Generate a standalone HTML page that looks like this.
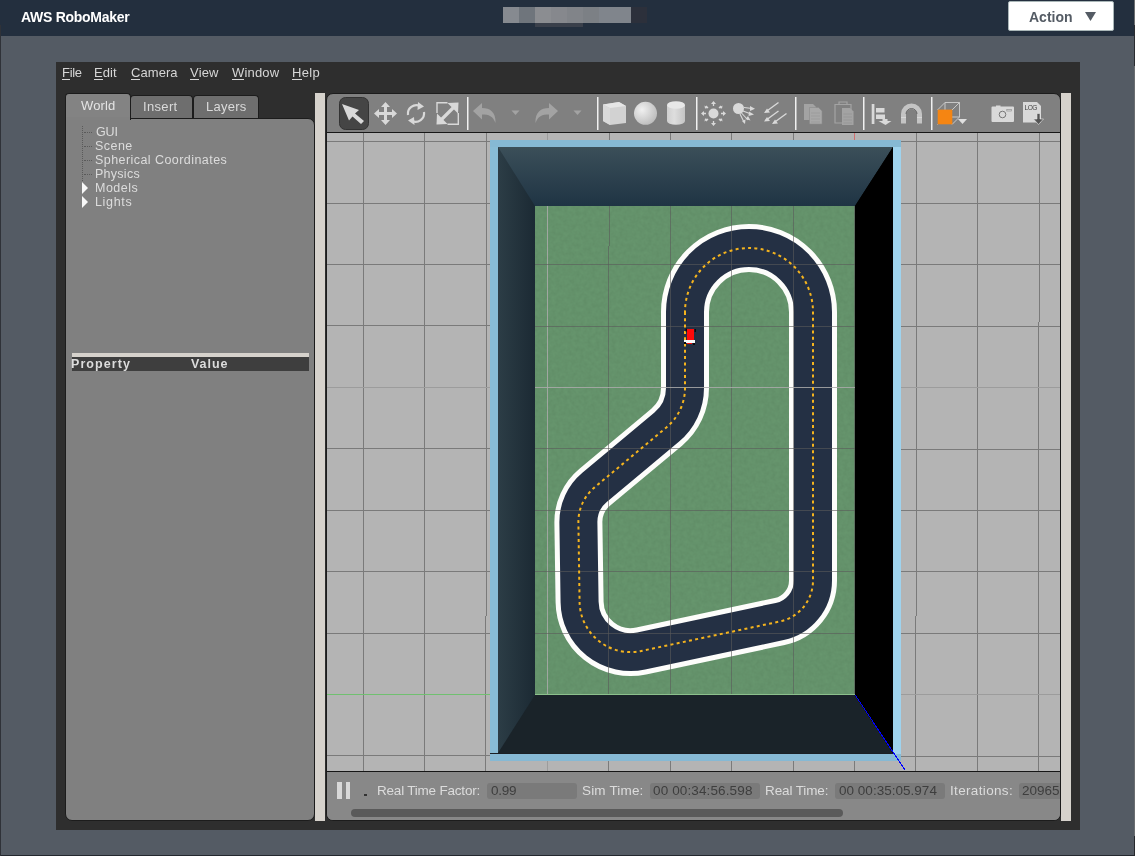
<!DOCTYPE html>
<html><head><meta charset="utf-8">
<style>
*{box-sizing:border-box}
html,body{margin:0;padding:0}
body{width:1135px;height:856px;overflow:hidden;position:relative;background:#545b64;font-family:"Liberation Sans", sans-serif}
.a{position:absolute}
.t{position:absolute;white-space:nowrap;line-height:1;will-change:transform}
</style></head><body>
<!-- top bar -->
<div class="a" style="left:0;top:0;width:1135px;height:36px;background:#232f3e"></div>
<div class="t" style="left:21px;top:10px;font-size:14px;font-weight:bold;letter-spacing:-0.283px;color:#fff;">AWS RoboMaker</div>
<!-- blurred title -->
<div class="a" style="left:503px;top:7px;width:16px;height:16px;background:#868a90"></div>
<div class="a" style="left:519px;top:7px;width:16px;height:16px;background:#6f757c"></div>
<div class="a" style="left:535px;top:7px;width:16px;height:16px;background:#8b8d91"></div>
<div class="a" style="left:551px;top:7px;width:16px;height:16px;background:#86888d"></div>
<div class="a" style="left:567px;top:7px;width:16px;height:16px;background:#818489"></div>
<div class="a" style="left:583px;top:7px;width:16px;height:16px;background:#7c8085"></div>
<div class="a" style="left:599px;top:7px;width:32px;height:16px;background:#80858c"></div>
<div class="a" style="left:631px;top:7px;width:16px;height:16px;background:#2c303b"></div>
<div class="a" style="left:535px;top:23px;width:48px;height:4px;background:#3a404b"></div>
<!-- action button -->
<div class="a" style="left:1008px;top:1px;width:106px;height:30px;background:#fff;border:1px solid #aab7b8;border-radius:2px"></div>
<div class="t" style="left:1029px;top:10px;font-size:14px;font-weight:bold;letter-spacing:0.0px;color:#545b64;">Action</div>
<svg class="a" style="left:1085px;top:12px" width="11" height="9"><path d="M0 0H11L5.5 9Z" fill="#545b64"/></svg>

<!-- gazebo window -->
<div class="a" style="left:56px;top:62px;width:1024px;height:768px;background:#2e2e2e"></div>
<div class="a" style="left:0;top:855px;width:1135px;height:1px;background:#23272e"></div>
<div class="a" style="left:0;top:25px;width:1px;height:831px;background:#2f3238"></div>
<div class="a" style="left:1134px;top:0;width:1px;height:25px;background:#6c6e70"></div>
<div class="a" style="left:1134px;top:25px;width:1px;height:41px;background:#2a2c30"></div>
<div class="a" style="left:1134px;top:66px;width:1px;height:770px;background:#6a6d70"></div>
<div class="a" style="left:1134px;top:836px;width:1px;height:20px;background:#26282c"></div>
<div class="t" style="left:61.5px;top:66px;font-size:13px;letter-spacing:-0.3px;color:#d6d6d6;"><span style="display:inline-block;height:14px;border-bottom:1px solid #d6d6d6">F</span>ile</div>
<div class="t" style="left:93.8px;top:66px;font-size:13px;letter-spacing:0.067px;color:#d6d6d6;"><span style="display:inline-block;height:14px;border-bottom:1px solid #d6d6d6">E</span>dit</div>
<div class="t" style="left:130.5px;top:66px;font-size:13px;letter-spacing:0.06px;color:#d6d6d6;"><span style="display:inline-block;height:14px;border-bottom:1px solid #d6d6d6">C</span>amera</div>
<div class="t" style="left:190.4px;top:66px;font-size:13px;letter-spacing:0.033px;color:#d6d6d6;"><span style="display:inline-block;height:14px;border-bottom:1px solid #d6d6d6">V</span>iew</div>
<div class="t" style="left:231.5px;top:66px;font-size:13px;letter-spacing:0.18px;color:#d6d6d6;"><span style="display:inline-block;height:14px;border-bottom:1px solid #d6d6d6">W</span>indow</div>
<div class="t" style="left:291.5px;top:66px;font-size:13px;letter-spacing:0.3px;color:#d6d6d6;"><span style="display:inline-block;height:14px;border-bottom:1px solid #d6d6d6">H</span>elp</div>


<!-- tabs -->
<div class="a" style="left:130px;top:95px;width:63px;height:24px;background:#6e6e6e;border:1px solid #1c1c1c;border-bottom:none;border-radius:4px 4px 0 0"></div>
<div class="a" style="left:193px;top:95px;width:66px;height:24px;background:#6e6e6e;border:1px solid #1c1c1c;border-bottom:none;border-radius:4px 4px 0 0"></div>
<div class="a" style="left:65px;top:118px;width:250px;height:703px;background:#808080;border:1px solid #1c1c1c;border-radius:0 7px 7px 7px"></div>
<div class="a" style="left:65px;top:93px;width:66px;height:27px;background:#838383;border:1px solid #1c1c1c;border-bottom:none;border-radius:4px 4px 0 0"></div>
<div class="a" style="left:66px;top:117px;width:64px;height:3px;background:#818181"></div>
<div class="t" style="left:81px;top:99px;font-size:13px;letter-spacing:0.125px;color:#e4e4e4;">World</div>
<div class="t" style="left:142.6px;top:100px;font-size:13px;letter-spacing:0.34px;color:#dadada;">Insert</div>
<div class="t" style="left:206px;top:100px;font-size:13px;letter-spacing:0.26px;color:#dadada;">Layers</div>
<!-- tree -->
<div class="a" style="left:82px;top:126px;width:0;height:55px;border-left:1px dotted #5a5a5a"></div>
<div class="a" style="left:84px;top:132px;width:8px;height:0;border-top:1px dotted #5a5a5a"></div>
<div class="a" style="left:84px;top:146px;width:8px;height:0;border-top:1px dotted #5a5a5a"></div>
<div class="a" style="left:84px;top:160px;width:8px;height:0;border-top:1px dotted #5a5a5a"></div>
<div class="a" style="left:84px;top:174px;width:8px;height:0;border-top:1px dotted #5a5a5a"></div>
<svg class="a" style="left:82px;top:182px" width="8" height="12"><path d="M0 0L6 6L0 12Z" fill="#f8f8f8"/></svg>
<svg class="a" style="left:82px;top:196px" width="8" height="12"><path d="M0 0L6 6L0 12Z" fill="#f8f8f8"/></svg>
<div class="t" style="left:95.8px;top:126px;font-size:12.5px;letter-spacing:-0.1px;color:#dcdcdc;">GUI</div>
<div class="t" style="left:94.8px;top:140px;font-size:12.5px;letter-spacing:0.45px;color:#dcdcdc;">Scene</div>
<div class="t" style="left:94.8px;top:154px;font-size:12.5px;letter-spacing:0.44px;color:#dcdcdc;">Spherical Coordinates</div>
<div class="t" style="left:94.8px;top:168px;font-size:12.5px;letter-spacing:0.267px;color:#dcdcdc;">Physics</div>
<div class="t" style="left:94.8px;top:182px;font-size:12.5px;letter-spacing:0.5px;color:#dcdcdc;">Models</div>
<div class="t" style="left:94.8px;top:196px;font-size:12.5px;letter-spacing:0.66px;color:#dcdcdc;">Lights</div>
<!-- property -->
<div class="a" style="left:72px;top:353px;width:237px;height:4px;background:#d6d2cc"></div>
<div class="a" style="left:72px;top:357px;width:237px;height:14px;background:#3e3e3e"></div>
<div class="t" style="left:71px;top:358px;font-size:12.5px;font-weight:bold;letter-spacing:1.086px;color:#dcdcdc;">Property</div>
<div class="t" style="left:191px;top:358px;font-size:12.5px;font-weight:bold;letter-spacing:0.975px;color:#dcdcdc;">Value</div>
<!-- splitters -->
<div class="a" style="left:315px;top:93px;width:10px;height:728px;background:#d6d2cc"></div>
<div class="a" style="left:1061px;top:93px;width:10px;height:728px;background:#d6d2cc"></div>


<div class="a" style="left:326px;top:93px;width:735px;height:728px;background:#808080;border:1px solid #1c1c1c;border-radius:7px"></div>
<svg class="a" style="left:0;top:0" width="1135" height="856" shape-rendering="auto">
<rect x="327" y="132" width="733" height="1" fill="#161616"/>
<rect x="327" y="133" width="733" height="638" fill="#b4b4b4"/>
<rect x="363" y="133" width="1" height="638" fill="#7a7a7a"/>
<rect x="424" y="133" width="1" height="638" fill="#7a7a7a"/>
<rect x="486" y="133" width="1" height="483" fill="#7a7a7a"/>
<rect x="485" y="616" width="1" height="155" fill="#7a7a7a"/>
<rect x="547" y="133" width="1" height="638" fill="#9c9c9c"/>
<rect x="609" y="133" width="1" height="113" fill="#7a7a7a"/>
<rect x="608" y="246" width="1" height="525" fill="#7a7a7a"/>
<rect x="670" y="133" width="1" height="638" fill="#7a7a7a"/>
<rect x="731" y="133" width="1" height="638" fill="#7a7a7a"/>
<rect x="793" y="133" width="1" height="638" fill="#7a7a7a"/>
<rect x="854" y="133" width="1" height="638" fill="#7a7a7a"/>
<rect x="916" y="133" width="1" height="483" fill="#7a7a7a"/>
<rect x="915" y="616" width="1" height="155" fill="#7a7a7a"/>
<rect x="977" y="133" width="1" height="638" fill="#7a7a7a"/>
<rect x="1039" y="133" width="1" height="189" fill="#7a7a7a"/>
<rect x="1038" y="322" width="1" height="449" fill="#7a7a7a"/>
<rect x="327" y="141" width="733" height="1" fill="#7a7a7a"/>
<rect x="327" y="203" width="733" height="1" fill="#7a7a7a"/>
<rect x="327" y="264" width="733" height="1" fill="#7a7a7a"/>
<rect x="327" y="325" width="185" height="1" fill="#7a7a7a"/>
<rect x="512" y="326" width="548" height="1" fill="#7a7a7a"/>
<rect x="327" y="387" width="733" height="1" fill="#9c9c9c"/>
<rect x="327" y="448" width="548" height="1" fill="#7a7a7a"/>
<rect x="875" y="449" width="185" height="1" fill="#7a7a7a"/>
<rect x="327" y="510" width="733" height="1" fill="#7a7a7a"/>
<rect x="327" y="571" width="733" height="1" fill="#7a7a7a"/>
<rect x="327" y="633" width="733" height="1" fill="#7a7a7a"/>
<rect x="327" y="694" width="733" height="1" fill="#9c9c9c"/>
<rect x="327" y="755" width="373" height="1" fill="#7a7a7a"/>
<rect x="700" y="756" width="360" height="1" fill="#7a7a7a"/>

<defs>
<linearGradient id="topw" x1="0" y1="0" x2="0" y2="1"><stop offset="0" stop-color="#3b4f59"/><stop offset="1" stop-color="#1f3444"/></linearGradient>
<linearGradient id="leftw" x1="0" y1="0" x2="1" y2="0"><stop offset="0" stop-color="#2c3d46"/><stop offset="1" stop-color="#1a2832"/></linearGradient>
<filter id="noise" x="0" y="0" width="100%" height="100%">
<feTurbulence type="fractalNoise" baseFrequency="0.25" numOctaves="2" seed="3"/>
<feColorMatrix values="0 0 0 0 0  0 0 0 0 0  0 0 0 0 0  0 0 0 0.08 0"/>
<feComposite in2="SourceGraphic" operator="in"/>
</filter>
</defs>
<!-- blue border -->
<rect x="490" y="140" width="411" height="7" fill="#86b9d4"/>
<rect x="490" y="147" width="8" height="607" fill="#88bcd6"/>
<rect x="893" y="147" width="8" height="607" fill="#9fd3ee"/>
<rect x="490" y="754" width="411" height="7" fill="#86b9d4"/>
<rect x="490" y="753" width="403" height="1" fill="#1a1f24"/>
<!-- walls -->
<path d="M498 147 H893 V753 H498 Z" fill="#000"/>
<rect x="498" y="147" width="40" height="606" fill="url(#leftw)"/>
<path d="M498 147 L893 147 L855 206 L535 206 Z" fill="url(#topw)"/>
<path d="M535 695 L855 695 L893 753 L498 753 Z" fill="#1a2329"/>
<path d="M893 147 L893 753 L855 695 L855 206 Z" fill="#000"/>
<!-- floor -->
<rect x="535" y="206" width="320" height="489" fill="#68986f"/>
<rect x="535" y="206" width="320" height="489" fill="#000" filter="url(#noise)"/>
<!-- track -->
<path d="M 685.00 312.00 L 685.00 388.04 A 51 51 0 0 1 666.67 427.20 L 594.55 487.38 A 45 45 0 0 0 578.39 522.60 L 579.58 601.87 A 51 51 0 0 0 641.18 650.99 L 779.74 621.52 A 42 42 0 0 0 813.00 580.44 L 813.00 312.00 A 64 64 0 0 0 685.00 312.00 Z" fill="none" stroke="#fdfdfb" stroke-width="48" stroke-linejoin="round"/>
<path d="M 685.00 312.00 L 685.00 388.04 A 51 51 0 0 1 666.67 427.20 L 594.55 487.38 A 45 45 0 0 0 578.39 522.60 L 579.58 601.87 A 51 51 0 0 0 641.18 650.99 L 779.74 621.52 A 42 42 0 0 0 813.00 580.44 L 813.00 312.00 A 64 64 0 0 0 685.00 312.00 Z" fill="none" stroke="#243044" stroke-width="38" stroke-linejoin="round"/>
<rect x="547" y="206" width="1" height="489" fill="rgba(170,170,170,0.85)"/>
<rect x="609" y="206" width="1" height="40" fill="rgba(90,90,90,0.6)"/>
<rect x="608" y="246" width="1" height="449" fill="rgba(90,90,90,0.6)"/>
<rect x="670" y="206" width="1" height="489" fill="rgba(90,90,90,0.6)"/>
<rect x="731" y="206" width="1" height="489" fill="rgba(90,90,90,0.6)"/>
<rect x="793" y="206" width="1" height="489" fill="rgba(90,90,90,0.6)"/>
<rect x="854" y="206" width="1" height="489" fill="rgba(90,90,90,0.6)"/>
<rect x="535" y="264" width="320" height="1" fill="rgba(90,90,90,0.6)"/>
<rect x="535" y="326" width="320" height="1" fill="rgba(90,90,90,0.6)"/>
<rect x="535" y="387" width="320" height="1" fill="rgba(170,170,170,0.85)"/>
<rect x="535" y="448" width="320" height="1" fill="rgba(90,90,90,0.6)"/>
<rect x="535" y="510" width="320" height="1" fill="rgba(90,90,90,0.6)"/>
<rect x="535" y="571" width="320" height="1" fill="rgba(90,90,90,0.6)"/>
<rect x="535" y="633" width="320" height="1" fill="rgba(90,90,90,0.6)"/>
<rect x="535" y="694" width="320" height="1" fill="rgba(170,170,170,0.85)"/>
<rect x="535" y="694" width="320" height="1" fill="#8cc08c"/>
<path d="M 685.00 312.00 L 685.00 388.04 A 51 51 0 0 1 666.67 427.20 L 594.55 487.38 A 45 45 0 0 0 578.39 522.60 L 579.58 601.87 A 51 51 0 0 0 641.18 650.99 L 779.74 621.52 A 42 42 0 0 0 813.00 580.44 L 813.00 312.00 A 64 64 0 0 0 685.00 312.00 Z" fill="none" stroke="#f5b41e" stroke-width="2" stroke-dasharray="3 3.3"/>
<!-- car -->
<rect x="687" y="329" width="7" height="11" fill="#ff0a0a"/>
<rect x="687" y="338" width="5" height="3" fill="#ff0a0a"/>
<rect x="685.5" y="328.5" width="1.5" height="3" fill="#0a0a0a"/>
<rect x="694.5" y="329" width="1.5" height="3" fill="#0a0a0a"/>
<rect x="684" y="340" width="11" height="3" fill="#fafafa"/>
<rect x="687" y="343" width="5" height="1" fill="#ff0a0a"/>
<rect x="684" y="342" width="2" height="2" fill="#0a0a0a"/>
<rect x="693" y="343" width="2" height="2" fill="#0a0a0a"/>
<!-- axes -->
<rect x="854" y="133" width="1" height="7" fill="#d07070"/>
<rect x="327" y="694" width="163" height="1" fill="#70c070"/>
<path d="M855.5 695.5 L905 770" stroke="#0000ff" stroke-width="1" shape-rendering="crispEdges"/>

<rect x="327" y="771" width="733" height="1" fill="#161616"/>

<rect x="467" y="97" width="1.5" height="33" fill="#f0f0f0"/><rect x="597" y="97" width="1.5" height="33" fill="#f0f0f0"/><rect x="696" y="97" width="1.5" height="33" fill="#f0f0f0"/><rect x="795" y="97" width="1.5" height="33" fill="#f0f0f0"/><rect x="863" y="97" width="1.5" height="33" fill="#f0f0f0"/><rect x="931" y="97" width="1.5" height="33" fill="#f0f0f0"/>
<!-- select -->
<rect x="339.5" y="97.5" width="29" height="32" rx="6" fill="#454545" stroke="#333" stroke-width="1"/>
<path d="M342 104 L359 110 L355 113.5 L364 121 L361 124 L352.5 116.5 L349 120.5 Z" fill="#d9d9d9"/>
<!-- translate -->
<g fill="#d9d9d9">
<path d="M385.5 102 L390 107 L387 107 L387 112 L392 112 L392 109 L397 113.5 L392 118 L392 115 L387 115 L387 120 L390 120 L385.5 125 L381 120 L384 120 L384 115 L379 115 L379 118 L374 113.5 L379 109 L379 112 L384 112 L384 107 L381 107 Z"/>
</g>
<!-- rotate -->
<g fill="none" stroke="#d9d9d9" stroke-width="2.2">
<path d="M408 115 A8.5 8.5 0 0 1 420 106"/>
<path d="M424 112 A8.5 8.5 0 0 1 412 121"/>
</g>
<path d="M418 102 L424 106.5 L417.5 110 Z" fill="#d9d9d9"/>
<path d="M414 117 L408 120.5 L414.5 125 Z" fill="#d9d9d9"/>
<!-- scale -->
<g fill="none" stroke="#d9d9d9" stroke-width="1.4">
<path d="M437 113 V102.7 H447.5"/>
<path d="M447.5 124.3 H458.3 V113"/>
</g>
<path d="M440 121 L455 106" stroke="#d9d9d9" stroke-width="3.2"/>
<path d="M436.5 124.5 L437 113.5 L447.5 124Z" fill="#d9d9d9"/>
<path d="M458.5 102.5 L458 113.5 L447.5 103Z" fill="#d9d9d9"/>
<!-- undo/redo -->
<g fill="#a3a3a3">
<path d="M473 111 L482 103 L482 108 C490 108 496 112 495.5 123 C493 116 489 114.5 482 114.5 L482 119.5 Z"/>
<path d="M558 111 L549 103 L549 108 C541 108 535 112 535.5 123 C538 116 542 114.5 549 114.5 L549 119.5 Z"/>
<path d="M511.5 110.5 H519.5 L515.5 115 Z"/>
<path d="M573.5 110.5 H581.5 L577.5 115 Z"/>
</g>
<!-- box -->
<defs>
<radialGradient id="sph" cx="0.35" cy="0.35" r="0.7"><stop offset="0" stop-color="#f0f0f0"/><stop offset="1" stop-color="#bdbdbd"/></radialGradient>
<linearGradient id="cyl" x1="0" x2="1"><stop offset="0" stop-color="#cfcfcf"/><stop offset="0.4" stop-color="#dedede"/><stop offset="1" stop-color="#c4c4c4"/></linearGradient>
</defs>
<path d="M603 104.5 L619 102 L626 106 L626 123 L610 125 L603 121 Z" fill="#d2d2d2"/>
<path d="M603 104.5 L619 102 L626 106 L610 108 Z" fill="#e6e6e6"/>
<path d="M603 104.5 L610 108 L610 125 L603 121 Z" fill="#dadada"/>
<circle cx="645.5" cy="113.3" r="11.5" fill="url(#sph)"/>
<path d="M667 105 V121 A9 3.8 0 0 0 685 121 V105 Z" fill="url(#cyl)"/>
<ellipse cx="676" cy="105" rx="9" ry="3.8" fill="#e8e8e8"/>
<!-- sun -->
<g fill="#d9d9d9">
<circle cx="713.5" cy="113.5" r="5"/>
</g>
<g stroke="#d9d9d9" stroke-width="1.3">
<path d="M713.5 103 V106 M713.5 121 V124 M703 113.5 H706 M721 113.5 H724 M706 106 L708 108 M719 119 L721 121 M721 106 L719 108 M706 121 L708 119"/>
</g>
<g fill="#d9d9d9">
<path d="M711 104 L713.5 101 L716 104Z M711 123 L713.5 126 L716 123Z M704 111 L701 113.5 L704 116Z M723 111 L726 113.5 L723 116Z"/>
<path d="M704.5 105.5 L705 108.5 L708 108Z M722.5 105.5 L722 108.5 L719 108Z M704.5 121.5 L705 118.5 L708 119Z M722.5 121.5 L722 118.5 L719 119Z"/>
</g>
<!-- spot -->
<circle cx="738.5" cy="108.5" r="5.5" fill="#d9d9d9"/>
<g stroke="#d9d9d9" stroke-width="1.1" fill="none">
<path d="M744 107.5 L752 108.5 M743 111 L751 114 M741.5 113 L748 120 M740 114 L744 122"/>
</g>
<g fill="#d9d9d9">
<path d="M750 106 L755 108.7 L750 111Z M749 111.5 L754 114.5 L748.5 116Z M745.5 119 L750.5 120.5 L748 116Z M742 121 L745 124 L745.5 119.5Z"/>
</g>
<!-- directional -->
<g stroke="#d9d9d9" stroke-width="1.4" fill="none">
<path d="M778.5 102.5 L765.5 112 M778.5 111 L765.5 120.5 M786.5 113.5 L773.5 123"/>
</g>
<g fill="#d9d9d9">
<path d="M764 113 L770 112.5 L767 108.5Z M764 121.5 L770 121 L767 117Z M772 124 L778 123.5 L775 119.5Z"/>
</g>
<!-- copy/paste -->
<g fill="#a3a3a3">
<path d="M804 104 H813 L816 107 V120 H804 Z"/>
<path d="M809.5 107.5 H818.5 L822 111 V124 H809.5 Z" fill="#a8a8a8" stroke="#8a8a8a" stroke-width="0.6"/>
</g>
<g stroke="#959595" stroke-width="0.6"><path d="M811 113 H820 M811 116 H820 M811 119 H820 M811 122 H820"/></g>
<g fill="none" stroke="#a3a3a3" stroke-width="1.2"><path d="M835 104.5 H851 V123 H835 Z"/><path d="M839 104 V102 H847 V104"/></g>
<path d="M842 108 H850 L853.5 111.5 V125 H842 Z" fill="#a3a3a3"/>
<g stroke="#909090" stroke-width="0.6"><path d="M843.5 114 H852 M843.5 117 H852 M843.5 120 H852 M843.5 123 H852"/></g>
<!-- align -->
<g fill="#d9d9d9">
<rect x="871.7" y="104" width="2.7" height="20"/>
<rect x="876" y="108" width="8.5" height="4.5"/>
<rect x="876" y="114.5" width="9" height="4.5"/>
<path d="M882.5 119 L882.5 121 L878.5 121 L885.5 125 L891.5 121 L887.5 121 L887.5 119Z"/>
</g>
<!-- magnet -->
<path d="M901 123.5 V114 A10.5 10.5 0 0 1 922 114 V123.5 H917 V114.5 A5.5 5.5 0 0 0 906 114.5 V123.5 Z" fill="#c4c4c4"/>
<rect x="901" y="117" width="5" height="1" fill="#d8d8d8"/><rect x="917" y="117" width="5" height="1" fill="#d8d8d8"/>
<path d="M906 114 A5.5 5.5 0 0 1 917 114" fill="none" stroke="#555" stroke-width="0.8"/>
<!-- view angle -->
<g fill="none" stroke="#cfcfcf" stroke-width="0.9">
<path d="M945 102.5 H959.5 V117 M945 102.5 L937.5 110 M959.5 102.5 L952 110 M959.5 117 L952 124.5 M945 102.5 V117 H959.5 M945 117 L937.5 124.5"/>
</g>
<rect x="937.7" y="109.6" width="14.6" height="14.7" fill="#f58512"/>
<path d="M958 119 H967 L962.5 124Z" fill="#e0e0e0"/>
<!-- camera -->
<path d="M991.5 107.5 Q991.5 106.5 992.5 106.5 H996 V105.5 H1000.5 V106.5 H1013 Q1014 106.5 1014 107.5 V121 Q1014 122 1013 122 H992.5 Q991.5 122 991.5 121 Z" fill="#d9d9d9"/>
<circle cx="1002.5" cy="114.5" r="3.3" fill="none" stroke="#777" stroke-width="1"/>
<rect x="1006.8" y="109.4" width="4.5" height="1.6" fill="none" stroke="#888" stroke-width="0.6"/>
<!-- log -->
<path d="M1023 102 H1037 L1041 106 V122.5 H1023 Z" fill="#d9d9d9"/>
<text x="1024.5" y="109.8" font-size="6.6" font-family="Liberation Sans" fill="#444" textLength="13">LOG</text>
<path d="M1037 113.5 H1040 V119 H1043.5 L1038.5 124.5 L1033.5 119 H1037 Z" fill="#555" stroke="#e8e8e8" stroke-width="0.6"/>

</svg>
<!-- status bar -->
<div class="a" style="left:327px;top:772px;width:733px;height:48px;background:#888;border-radius:0 0 6px 6px"></div>
<div class="a" style="left:337px;top:782px;width:4.5px;height:17px;background:#d8d8d8"></div>
<div class="a" style="left:345.5px;top:782px;width:4.5px;height:17px;background:#d8d8d8"></div>
<div class="a" style="left:364px;top:794px;width:3px;height:2px;background:#333"></div>
<div class="t" style="left:376.7px;top:784px;font-size:13.5px;letter-spacing:-0.206px;color:#dcdcdc;">Real Time Factor:</div>
<div class="a" style="left:487px;top:783px;width:90px;height:16px;background:#7a7a7a;border-radius:3px"></div>
<div class="t" style="left:490.9px;top:784px;font-size:13.5px;letter-spacing:-0.267px;color:#3e3e3e;">0.99</div>
<div class="t" style="left:582.4px;top:784px;font-size:13.5px;letter-spacing:0.162px;color:#dcdcdc;">Sim Time:</div>
<div class="a" style="left:650px;top:783px;width:110px;height:16px;background:#7a7a7a;border-radius:3px"></div>
<div class="t" style="left:653px;top:784px;font-size:13.5px;letter-spacing:0.129px;color:#3e3e3e;">00 00:34:56.598</div>
<div class="t" style="left:765px;top:784px;font-size:13.5px;letter-spacing:-0.111px;color:#dcdcdc;">Real Time:</div>
<div class="a" style="left:835px;top:783px;width:110px;height:16px;background:#7a7a7a;border-radius:3px"></div>
<div class="t" style="left:838.5px;top:784px;font-size:13.5px;letter-spacing:0.021px;color:#3e3e3e;">00 00:35:05.974</div>
<div class="t" style="left:950px;top:784px;font-size:13.5px;letter-spacing:0.34px;color:#dcdcdc;">Iterations:</div>
<div class="a" style="left:1019px;top:783px;width:41px;height:16px;background:#7a7a7a;border-radius:3px 0 0 3px"></div>
<div class="t" style="left:1022px;top:784px;font-size:13.5px;letter-spacing:0px;color:#3e3e3e;">20965</div>
<div class="a" style="left:351px;top:809px;width:492px;height:8px;background:#5a5a5a;border-radius:4px"></div>

</body></html>
